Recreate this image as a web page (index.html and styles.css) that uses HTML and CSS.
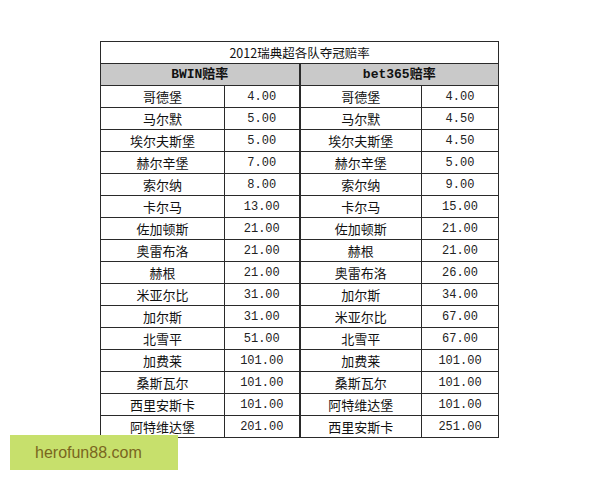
FILE: index.html
```html
<!DOCTYPE html>
<html>
<head>
<meta charset="utf-8">
<link rel="stylesheet" href="styles.css">
</head>
<body>
<div class="page">
  <table class="odds">
    <colgroup>
      <col class="c-name-l"><col class="c-val-l"><col class="c-name-r"><col class="c-val-r">
    </colgroup>
    <tr class="title"><td colspan="4">2012瑞典超各队夺冠赔率</td></tr>
    <tr class="head"><td colspan="2" class="mid">BWIN赔率</td><td colspan="2">bet365赔率</td></tr>
    <tr><td>哥德堡</td><td class="num mid">4.00</td><td>哥德堡</td><td class="num">4.00</td></tr>
    <tr><td>马尔默</td><td class="num mid">5.00</td><td>马尔默</td><td class="num">4.50</td></tr>
    <tr><td>埃尔夫斯堡</td><td class="num mid">5.00</td><td>埃尔夫斯堡</td><td class="num">4.50</td></tr>
    <tr><td>赫尔辛堡</td><td class="num mid">7.00</td><td>赫尔辛堡</td><td class="num">5.00</td></tr>
    <tr><td>索尔纳</td><td class="num mid">8.00</td><td>索尔纳</td><td class="num">9.00</td></tr>
    <tr><td>卡尔马</td><td class="num mid">13.00</td><td>卡尔马</td><td class="num">15.00</td></tr>
    <tr><td>佐加顿斯</td><td class="num mid">21.00</td><td>佐加顿斯</td><td class="num">21.00</td></tr>
    <tr><td>奥雷布洛</td><td class="num mid">21.00</td><td>赫根</td><td class="num">21.00</td></tr>
    <tr><td>赫根</td><td class="num mid">21.00</td><td>奥雷布洛</td><td class="num">26.00</td></tr>
    <tr><td>米亚尔比</td><td class="num mid">31.00</td><td>加尔斯</td><td class="num">34.00</td></tr>
    <tr><td>加尔斯</td><td class="num mid">31.00</td><td>米亚尔比</td><td class="num">67.00</td></tr>
    <tr><td>北雪平</td><td class="num mid">51.00</td><td>北雪平</td><td class="num">67.00</td></tr>
    <tr><td>加费莱</td><td class="num mid">101.00</td><td>加费莱</td><td class="num">101.00</td></tr>
    <tr><td>桑斯瓦尔</td><td class="num mid">101.00</td><td>桑斯瓦尔</td><td class="num">101.00</td></tr>
    <tr><td>西里安斯卡</td><td class="num mid">101.00</td><td>阿特维达堡</td><td class="num">101.00</td></tr>
    <tr><td>阿特维达堡</td><td class="num mid">201.00</td><td>西里安斯卡</td><td class="num">251.00</td></tr>
  </table>
  <div class="watermark">herofun88.com</div>
</div>
</body>
</html>
```
FILE: styles.css
```css
html, body {
  margin: 0;
  padding: 0;
  background: #ffffff;
}
.page {
  position: relative;
  width: 600px;
  height: 480px;
  padding: 41px 0 0 100px;
  box-sizing: border-box;
}
.odds {
  border-collapse: collapse;
  table-layout: fixed;
  width: 398px;
  font-family: "Noto Sans CJK SC", "Liberation Sans", sans-serif;
  font-size: 13px;
  color: #111;
}
.c-name-l { width: 124px; }
.c-val-l { width: 75px; }
.c-name-r { width: 122px; }
.c-val-r { width: 77px; }
.odds td {
  border: 1px solid #2a2a2a;
  height: 21px;
  padding: 0;
  text-align: center;
  line-height: 20px;
  white-space: nowrap;
}
.odds td.mid {
  border-right: 2px solid #2a2a2a;
}
.title td {
  font-size: 12.5px;
}
.head td {
  background: #c9c9c9;
  font-weight: bold;
  font-family: "Liberation Mono", "Noto Sans CJK SC", monospace;
  font-size: 13px;
}
.num {
  font-family: "Liberation Mono", monospace;
  font-size: 12px;
  color: #222;
}
.watermark {
  position: absolute;
  left: 10px;
  top: 435px;
  width: 168px;
  height: 35px;
  background: #c7e06c;
  color: #7a661e;
  font-family: "Liberation Sans", Arial, sans-serif;
  font-size: 16px;
  line-height: 35px;
  padding-left: 25px;
  box-sizing: border-box;
}
```
